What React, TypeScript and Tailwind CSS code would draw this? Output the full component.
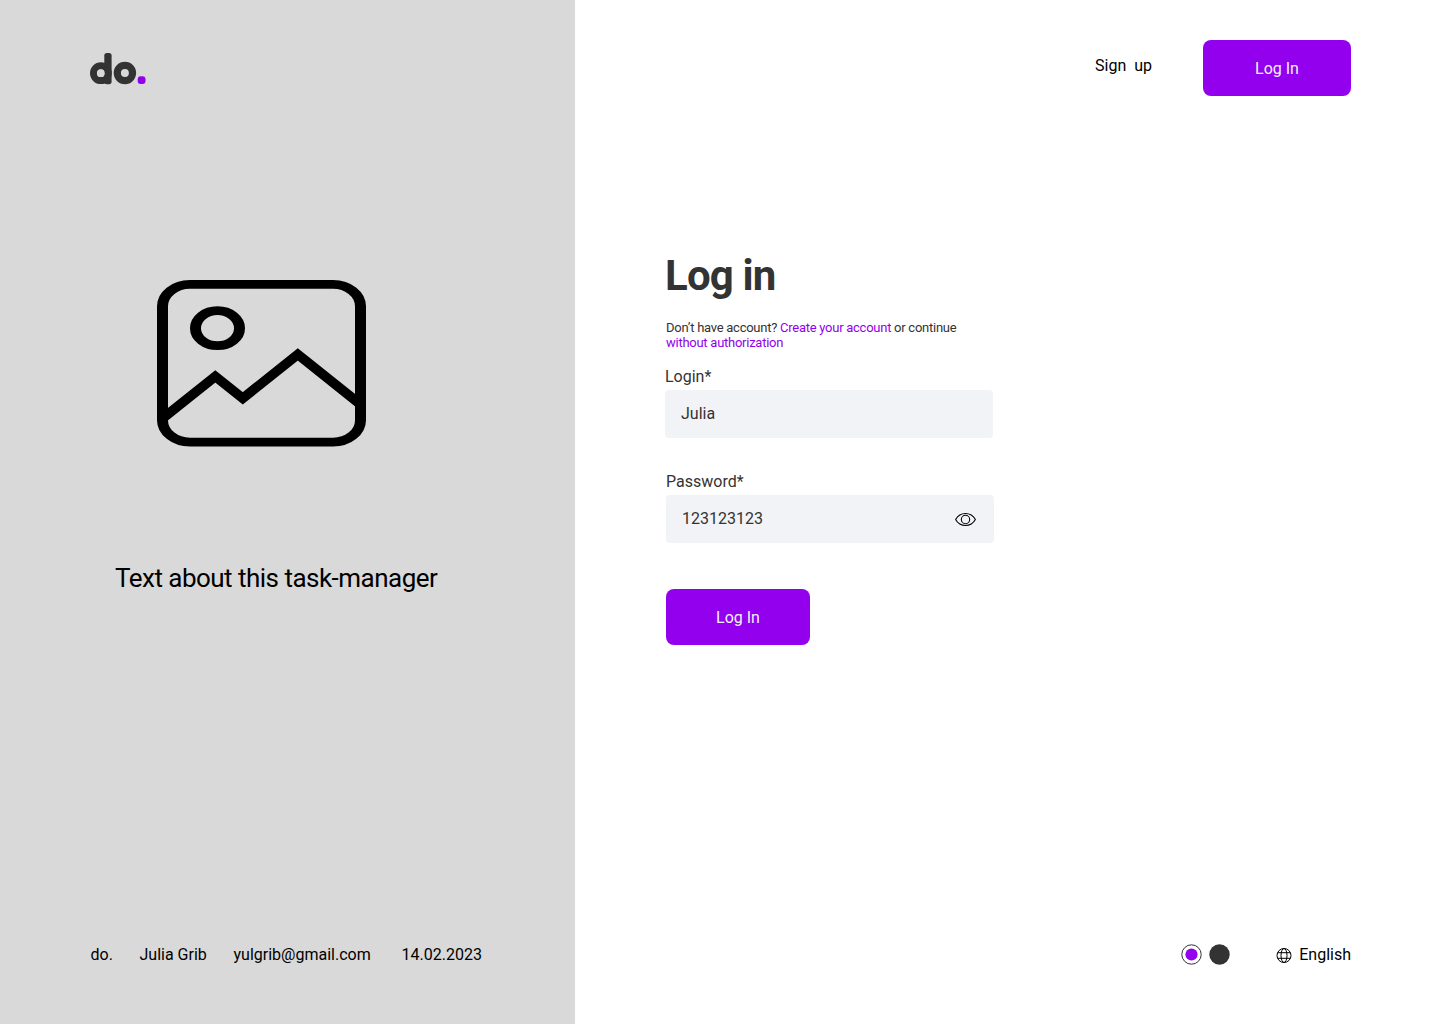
function Logo() {
  return (
    <svg width="56" height="32" viewBox="0 0 56 32" role="img" aria-label="do.">
      <circle cx="10.9" cy="20.2" r="7.3" fill="none" stroke="#333" strokeWidth="7.2" />
      <rect x="14.3" y="0" width="7.3" height="31.2" rx="2.6" fill="#333" />
      <circle cx="10.8" cy="20.2" r="3.9" fill="#d9d9d9" />
      <circle cx="34.9" cy="20" r="7.6" fill="none" stroke="#333" strokeWidth="7.2" />
      <rect x="47.7" y="23.3" width="7.8" height="7.8" rx="3" fill="#9300ee" />
    </svg>
  );
}

function PictureIcon() {
  return (
    <svg
      className="ml-[157px] mt-[195px]"
      width="209"
      height="166.5"
      viewBox="0 0 19 19"
      preserveAspectRatio="none"
      fill="none"
      stroke="#000"
      strokeWidth="1"
    >
      <rect x=".5" y=".5" width="18" height="18" rx="2.5" />
      <circle cx="5.5" cy="5.5" r="2" />
      <path d="M.6 15.7 5.3 11l2.5 2.5 5-5 5.6 5.6" />
    </svg>
  );
}

function EyeIcon() {
  return (
    <svg width="22" height="16" viewBox="0 0 22 16" fill="none" stroke="#000" strokeWidth="1.1">
      <path
        d="M1.6 8.5C3.8 4.6 7.3 2.5 11.5 2.5s7.7 2.1 9.9 6c-2.2 3.9-5.7 6-9.9 6s-7.7-2.1-9.9-6Z"
        strokeLinejoin="round"
      />
      <circle cx="11.5" cy="8.5" r="4.2" />
    </svg>
  );
}

function GlobeIcon() {
  return (
    <svg width="16" height="16" viewBox="0 0 16 16" fill="none" stroke="#000" strokeWidth="1">
      <circle cx="8" cy="7.5" r="7" />
      <ellipse cx="8" cy="7.5" rx="3" ry="7" />
      <path d="M1.6 4.7h12.8M1.6 10.3h12.8" />
    </svg>
  );
}

export default function App() {
  return (
    <div className="flex h-[1024px] w-[1440px] overflow-hidden bg-white font-['Roboto',sans-serif] text-base leading-[19px] text-black">
      <aside className="flex w-[575px] shrink-0 flex-col bg-[#d9d9d9]">
        <div className="ml-[90px] mt-[53px] h-8">
          <Logo />
        </div>
        <PictureIcon />
        <p className="ml-[115px] mt-[116.5px] whitespace-nowrap text-[26px] leading-[31px] tracking-[-0.52px]">
          Text about this task-manager
        </p>
        <footer className="mb-[60px] ml-[90.5px] mt-auto flex whitespace-nowrap">
          <span className="w-[49px]">do.</span>
          <span className="w-[94px]">Julia Grib</span>
          <span className="w-[168px]">yulgrib@gmail.com</span>
          <span>14.02.2023</span>
        </footer>
      </aside>

      <main className="flex grow flex-col">
        <header className="mr-[89px] mt-10 flex justify-end">
          <a className="mr-[51px] mt-4 whitespace-pre">Sign  up</a>
          <button className="h-14 w-[148px] rounded-lg bg-[#9300ee] text-[#f1f2f6]">Log In</button>
        </header>

        <form className="ml-[90px] mt-[155px] flex w-[330px] flex-col items-start text-[#333]">
          <h1 className="text-[42px] font-bold leading-[49px] tracking-[-0.84px]">Log in</h1>
          <p className="ml-px mt-5 whitespace-nowrap text-[13px] leading-[15px] tracking-[-0.26px]">
            Don’t have account? <a className="text-[#9300ee]">Create your account</a> or continue
            <br />
            <a className="text-[#9300ee]">without authorization</a>
          </p>
          <label className="mt-[17px]">Login*</label>
          <div className="mt-1 flex h-12 w-[328px] items-center rounded bg-[#f2f3f7] px-4 pb-px">Julia</div>
          <label className="ml-px mt-[34px]">Password*</label>
          <div className="ml-px mt-1 flex h-12 w-[328px] items-center justify-between rounded bg-[#f2f3f7] pl-4 pr-[18px]">
            <span className="pb-0.5">123123123</span>
            <EyeIcon />
          </div>
          <button className="ml-px mt-[46px] h-14 w-36 rounded-lg bg-[#9300ee] text-[#f1f2f6]">Log In</button>
        </form>

        <footer className="mb-[60px] mr-[89px] mt-auto flex h-[19px] items-center justify-end">
          <svg className="mt-px" width="50" height="22" viewBox="0 0 50 22">
            <circle cx="11.5" cy="10.5" r="9.7" fill="#fff" stroke="#333" strokeWidth="1" />
            <circle cx="11.5" cy="10.5" r="6.1" fill="#9300ee" />
            <circle cx="39.5" cy="10.5" r="10.2" fill="#333" />
          </svg>
          <span className="ml-[46px] mr-[7.5px] pt-[2px]">
            <GlobeIcon />
          </span>
          <span>English</span>
        </footer>
      </main>
    </div>
  );
}
